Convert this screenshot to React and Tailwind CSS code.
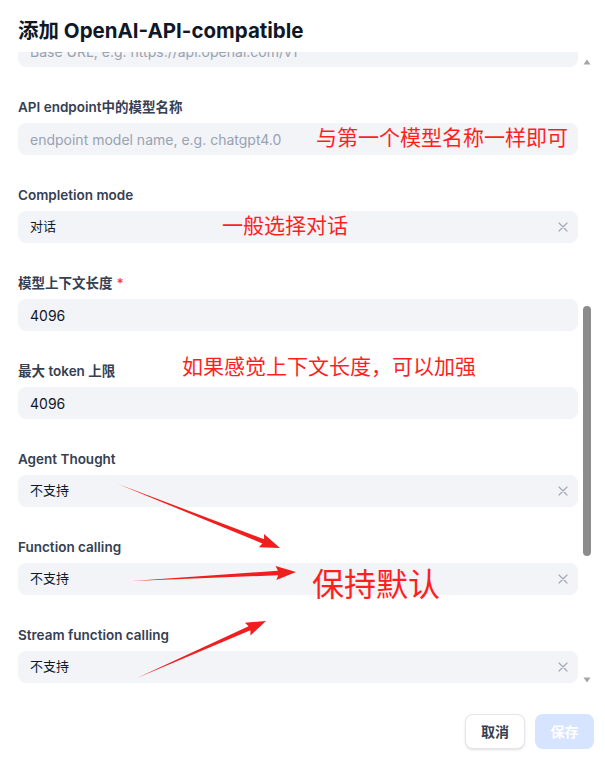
import React from "react";

const FONT = { fontFamily: 'Inter, "Noto Sans CJK SC", sans-serif' };
const CJK = { fontFamily: '"Noto Sans CJK SC", "Noto Sans", sans-serif' };

function arrowPoints(x1, y1, x2, y2, shaft = 4.5, headW = 14, headL = 18) {
  const dx = x2 - x1, dy = y2 - y1;
  const len = Math.hypot(dx, dy);
  const ux = dx / len, uy = dy / len;
  const nx = -uy, ny = ux;
  const bx = x2 - ux * headL, by = y2 - uy * headL;
  const p = (x, y) => `${x.toFixed(1)},${y.toFixed(1)}`;
  return [
    p(x1, y1),
    p(bx + nx * shaft / 2, by + ny * shaft / 2),
    p(bx + nx * headW / 2 - ux * 2, by + ny * headW / 2 - uy * 2),
    p(x2, y2),
    p(bx - nx * headW / 2 - ux * 2, by - ny * headW / 2 - uy * 2),
    p(bx - nx * shaft / 2, by - ny * shaft / 2),
  ].join(" ");
}

function XIcon() {
  return (
    <svg width="10" height="10" viewBox="0 0 10 10" className="shrink-0">
      <path d="M1 1L9 9M9 1L1 9" stroke="#a3a9b5" strokeWidth="1.2" strokeLinecap="round" />
    </svg>
  );
}

function Field({ label, required, children }) {
  return (
    <div className="flex flex-col">
      <div className="h-5 leading-5 mb-[7px] pt-px text-[13.5px] font-semibold text-[#354052]">
        {label}
        {required && <span className="text-[#f04438] ml-1">*</span>}
      </div>
      {children}
    </div>
  );
}

function TextBox({ value, placeholder }) {
  return (
    <div className="h-8 rounded-lg bg-[#f2f4f7] flex items-center px-3 text-[14px]">
      {value ? (
        <span className="text-[#101828]">{value}</span>
      ) : (
        <span className="text-[#98a2b3]">{placeholder}</span>
      )}
    </div>
  );
}

function SelectBox({ value }) {
  return (
    <div className="h-8 rounded-lg bg-[#f2f4f7] flex items-center justify-between pl-3 pr-[10px] text-[13px]">
      <span className="text-[#101828]">{value}</span>
      <XIcon />
    </div>
  );
}

export default function App() {
  return (
    <div className="relative w-[605px] h-[770px] bg-white flex flex-col overflow-hidden" style={FONT}>
      <div className="pt-[17px] px-[18px] pb-[7px] h-[52px] text-[20.5px] leading-[28px] font-bold text-[#101828]">
        添加 OpenAI-API-compatible
      </div>

      <div className="flex h-[636px]">
        <div className="w-[578px] pl-[18px] overflow-hidden">
          <div className="flex flex-col gap-[29px] -mt-[17px]">
            <TextBox placeholder="Base URL, e.g. https://api.openai.com/v1" />
            <Field label="API endpoint中的模型名称">
              <TextBox placeholder="endpoint model name, e.g. chatgpt4.0" />
            </Field>
            <Field label="Completion mode">
              <SelectBox value="对话" />
            </Field>
            <Field label="模型上下文长度" required>
              <TextBox value="4096" />
            </Field>
            <Field label="最大 token 上限">
              <TextBox value="4096" />
            </Field>
            <Field label="Agent Thought">
              <SelectBox value="不支持" />
            </Field>
            <Field label="Function calling">
              <SelectBox value="不支持" />
            </Field>
            <Field label="Stream function calling">
              <SelectBox value="不支持" />
            </Field>
          </div>
        </div>

        <div className="w-[14px] ml-[2px] flex flex-col items-center pt-[7px] pb-[5px]">
          <svg width="8" height="6" viewBox="0 0 8 6">
            <path d="M4 0.5L7.5 5.5H0.5Z" fill="#a5a5a5" />
          </svg>
          <div className="h-[241px]" />
          <div className="w-[8px] h-[250px] rounded-full bg-[#8c8c8c]" />
          <div className="flex-1" />
          <svg width="8" height="6" viewBox="0 0 8 6">
            <path d="M4 5.5L7.5 0.5H0.5Z" fill="#a5a5a5" />
          </svg>
        </div>
      </div>

      <div className="flex justify-end gap-[10px] pt-[26px] pr-[11px]">
        <button className="h-[35px] w-[60px] rounded-lg border border-[#e4e7ec] bg-white shadow-sm text-[14px] font-semibold text-[#344054]">
          取消
        </button>
        <button className="h-[35px] w-[59px] rounded-lg bg-[#d6e4ff] text-[14px] font-semibold text-white">
          保存
        </button>
      </div>

      {/* annotations */}
      <span className="absolute left-[316px] top-[126px] text-[21px] leading-[21px] text-[#ff1f1f] whitespace-nowrap" style={CJK}>
        与第一个模型名称一样即可
      </span>
      <span className="absolute left-[222px] top-[214px] text-[21px] leading-[21px] text-[#ff1f1f] whitespace-nowrap" style={CJK}>
        一般选择对话
      </span>
      <span className="absolute left-[182px] top-[355px] text-[21px] leading-[21px] text-[#ff1f1f] whitespace-nowrap" style={CJK}>
        如果感觉上下文长度，可以加强
      </span>
      <span className="absolute left-[312px] top-[566px] text-[32px] leading-[32px] text-[#ff1f1f] whitespace-nowrap" style={CJK}>
        保持默认
      </span>

      <svg className="absolute left-0 top-0 pointer-events-none" width="605" height="770">
        <polygon points={arrowPoints(118, 484, 280, 548)} fill="#f21d1d" />
        <polygon points={arrowPoints(132, 581, 296, 572)} fill="#f21d1d" />
        <polygon points={arrowPoints(137, 678, 266, 621)} fill="#f21d1d" />
      </svg>
    </div>
  );
}
